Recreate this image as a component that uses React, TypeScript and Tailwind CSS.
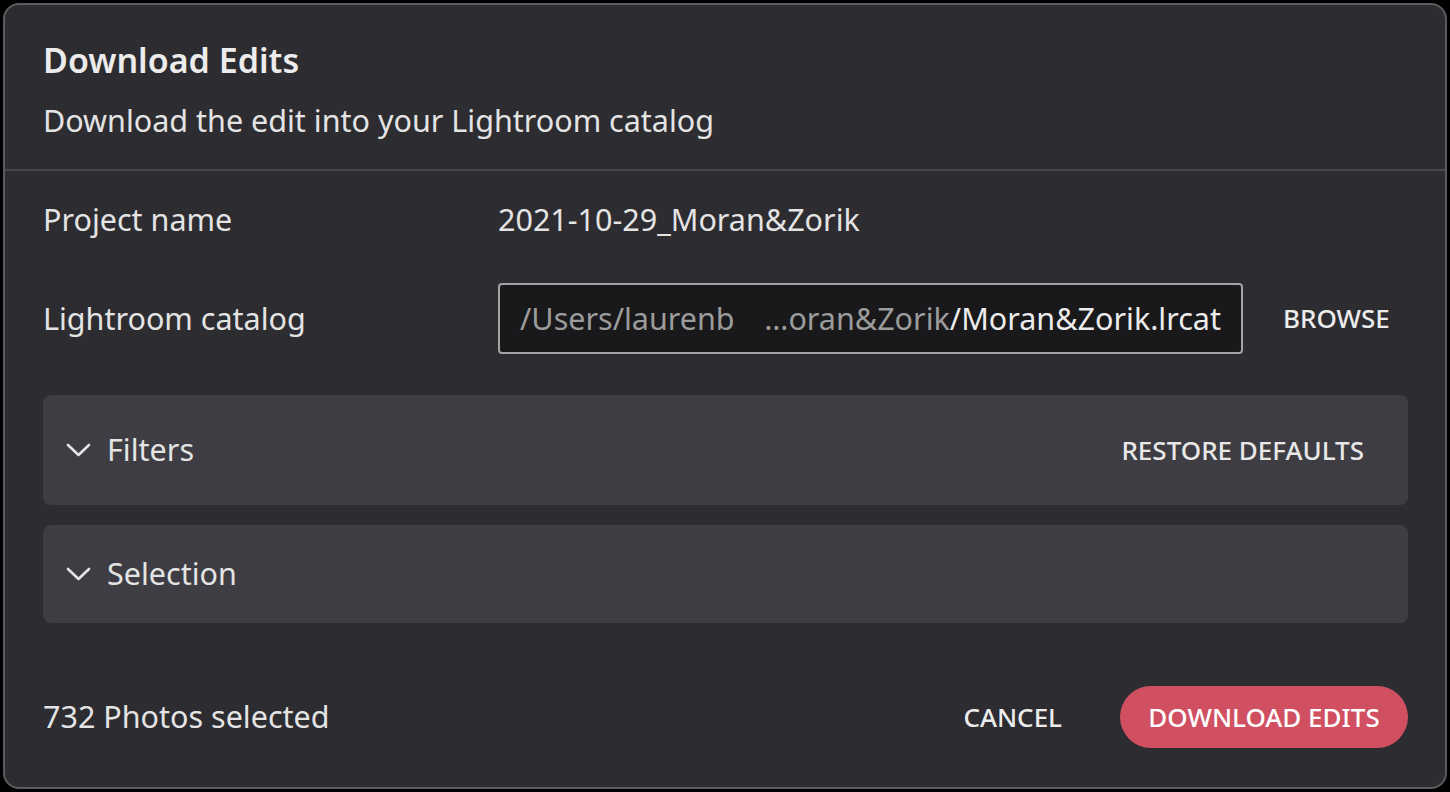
const FONT = { fontFamily: '"Noto Sans", "Open Sans", sans-serif' };

function Chevron() {
  return (
    <svg width="25" height="14" viewBox="0 0 25 14" fill="none" className="shrink-0">
      <polyline points="2,2 12.5,12 23,2" stroke="#e4e4e4" strokeWidth="2.6" strokeLinecap="round" strokeLinejoin="round" />
    </svg>
  );
}

function Panel({ title, action, tall }: { title: string; action?: string; tall?: boolean }) {
  return (
    <div
      className={`flex items-center justify-between rounded-lg bg-[#3e3d43] pl-[23px] pr-[44px] ${
        tall ? 'h-[110px]' : 'h-[98px]'
      }`}
    >
      <div className="flex items-center gap-[16px]">
        <Chevron />
        <span className="text-[30.5px] text-[#e4e4e4]">{title}</span>
      </div>
      {action && <button className="text-[26px] font-medium text-[#e8e8e8]">{action}</button>}
    </div>
  );
}

export default function App() {
  return (
    <div className="h-[792px] w-[1450px] bg-black p-[3px]" style={FONT}>
      <div className="flex h-[786px] flex-col overflow-hidden rounded-2xl border-2 border-[#5b5a5f] bg-[#2d2c31] text-[#e4e4e4]">
        <div className="border-b-2 border-[#48474c] pb-[28px] pl-[38px] pr-[37px] pt-[32px]">
          <h2 className="text-[34px] font-semibold leading-[46px] text-[#ececec]">Download Edits</h2>
          <p className="mt-[16px] text-[30.5px] leading-[42px]">Download the edit into your Lightroom catalog</p>
        </div>

        <div className="flex flex-1 flex-col pl-[38px] pr-[37px]">
          <div className="mt-[26px] flex h-[46px] items-center">
            <span className="w-[455px] text-[30.5px]">Project name</span>
            <span className="text-[30.5px]">2021-10-29_Moran&amp;Zorik</span>
          </div>

          <div className="mt-[40px] flex items-center">
            <span className="w-[455px] text-[30.5px]">Lightroom catalog</span>
            <div className="flex h-[71px] w-[745px] items-center justify-between overflow-hidden whitespace-nowrap rounded-[4px] border-2 border-[#a3a3a3] bg-[#19191b] px-[20px] text-[30.5px]">
              <span className="text-[#9c9c9c]">/Users/laurenb</span>
              <span>
                <span className="text-[#9c9c9c]">…oran&amp;Zorik</span>
                <span className="text-[#ececec]">/Moran&amp;Zorik.lrcat</span>
              </span>
            </div>
            <button className="ml-[40px] text-[26px] font-medium text-[#ececec]">BROWSE</button>
          </div>

          <div className="mt-[41px] flex flex-col gap-[20px]">
            <Panel title="Filters" action="RESTORE DEFAULTS" tall />
            <Panel title="Selection" />
          </div>

          <div className="mt-[63px] flex items-center justify-between">
            <span className="text-[30.5px]">732 Photos selected</span>
            <div className="flex items-center gap-[58px]">
              <button className="text-[26px] font-medium text-[#ececec]">CANCEL</button>
              <button className="h-[62px] w-[288px] rounded-full bg-[#d05062] text-[26px] font-medium text-white">
                DOWNLOAD EDITS
              </button>
            </div>
          </div>
        </div>
      </div>
    </div>
  );
}
